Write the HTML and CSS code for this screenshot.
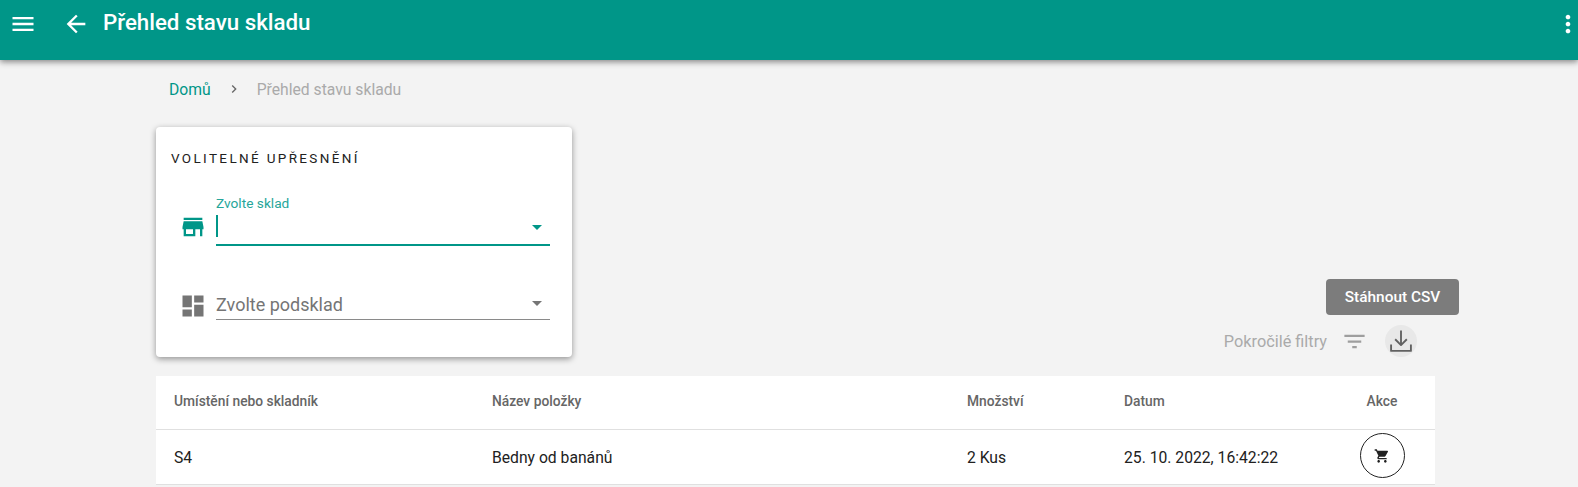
FILE: index.html
```html
<!DOCTYPE html>
<html lang="cs">
<head>
    <meta charset="UTF-8">
    <title>Přehled stavu skladu</title>
    <link rel="stylesheet" href="styles.css">
</head>
<body>
    <header class="topbar">
        <svg class="topbar-icon menu-icon" viewBox="0 0 24 24"><path d="M3 18h18v-2H3v2zm0-5h18v-2H3v2zm0-7v2h18V6H3z"/></svg>
        <svg class="topbar-icon back-icon" viewBox="0 0 24 24"><path d="M20 11H7.83l5.59-5.59L12 4l-8 8 8 8 1.41-1.41L7.83 13H20v-2z"/></svg>
        <h1 class="topbar-title">Přehled stavu skladu</h1>
        <svg class="topbar-icon more-icon" viewBox="0 0 24 24"><path d="M12 8c1.1 0 2-.9 2-2s-.9-2-2-2-2 .9-2 2 .9 2 2 2zm0 2c-1.1 0-2 .9-2 2s.9 2 2 2 2-.9 2-2-.9-2-2-2zm0 6c-1.1 0-2 .9-2 2s.9 2 2 2 2-.9 2-2-.9-2-2-2z"/></svg>
    </header>

    <main class="content">
        <nav class="breadcrumb">
            <a class="crumb-link">Domů</a>
            <svg class="crumb-sep" viewBox="0 0 24 24"><path d="M10 6L8.59 7.41 13.17 12l-4.58 4.59L10 18l6-6z"/></svg>
            <span class="crumb-current">Přehled stavu skladu</span>
        </nav>

        <div class="toolbar">
            <section class="card">
                <h2 class="card-title">VOLITELNÉ UPŘESNĚNÍ</h2>

                <div class="field field-active">
                    <svg class="field-icon" viewBox="0 0 24 24"><path d="M20 4H4v2h16V4zm1 10v-2l-1-5H4l-1 5v2h1v6h10v-6h4v6h2v-6h1zm-9 4H6v-4h6v4z"/></svg>
                    <div class="field-body">
                        <label class="field-label">Zvolte sklad</label>
                        <div class="field-input">
                            <span class="caret"></span>
                            <span class="arrow"></span>
                        </div>
                    </div>
                </div>

                <div class="field">
                    <svg class="field-icon" viewBox="0 0 24 24"><path d="M3 13h8V3H3v10zm0 8h8v-6H3v6zm10 0h8V11h-8v10zm0-18v6h8V3h-8z"/></svg>
                    <div class="field-body">
                        <div class="field-input">
                            <span class="placeholder">Zvolte podsklad</span>
                            <span class="arrow"></span>
                        </div>
                    </div>
                </div>
            </section>

            <div class="actions">
                <button class="csv-button">Stáhnout CSV</button>
                <div class="filters">
                    <span class="filters-label">Pokročilé filtry</span>
                    <svg class="filter-icon" viewBox="0 0 24 24"><path d="M10 18h4v-2h-4v2zM3 6v2h18V6H3zm3 7h12v-2H6v2z"/></svg>
                    <span class="download-round">
                        <svg class="download-icon" viewBox="0 0 24 24"><path d="M12 3v12M7 10.5l5 5 5-5M3.5 15v5.5h17V15"/></svg>
                    </span>
                </div>
            </div>
        </div>

        <table class="stock-table">
            <thead>
                <tr>
                    <th class="col-place">Umístění nebo skladník</th>
                    <th class="col-name">Název položky</th>
                    <th class="col-qty">Množství</th>
                    <th class="col-date">Datum</th>
                    <th class="col-action">Akce</th>
                </tr>
            </thead>
            <tbody>
                <tr>
                    <td>S4</td>
                    <td>Bedny od banánů</td>
                    <td>2 Kus</td>
                    <td>25. 10. 2022, 16:42:22</td>
                    <td class="col-action">
                        <button class="cart-button">
                            <svg class="cart-icon" viewBox="0 0 24 24"><path d="M7 18c-1.1 0-1.99.9-1.99 2S5.9 22 7 22s2-.9 2-2-.9-2-2-2zM1 2v2h2l3.6 7.59-1.35 2.45c-.16.28-.25.61-.25.96 0 1.1.9 2 2 2h12v-2H7.42c-.14 0-.25-.11-.25-.25l.03-.12.9-1.63h7.45c.75 0 1.41-.41 1.75-1.03l3.58-6.49c.08-.14.12-.31.12-.48 0-.55-.45-1-1-1H5.21l-.94-2H1zm16 16c-1.1 0-1.99.9-1.99 2s.89 2 1.99 2 2-.9 2-2-.9-2-2-2z"/></svg>
                        </button>
                    </td>
                </tr>
            </tbody>
        </table>
    </main>
</body>
</html>
```

FILE: styles.css
```css
html, body {
    height: 100%;
    overflow: hidden;
}
body {
    margin: 0;
    background: #f3f3f3;
    font-family: Roboto, "Liberation Sans", sans-serif;
    color: #212121;
}

/* top bar */
.topbar {
    display: flex;
    align-items: flex-start;
    height: 60px;
    background: #009688;
    box-shadow: 0 2px 6px rgba(0,0,0,0.45);
    position: relative;
}
.topbar-icon {
    width: 28px;
    height: 28px;
    fill: #fff;
    margin-top: 10px;
    flex: none;
}
.menu-icon {
    margin-left: 9px;
}
.back-icon {
    margin-left: 25px;
}
.topbar-title {
    margin: 7px 0 0 13px;
    font-size: 22.3px;
    font-weight: 500;
    line-height: 30px;
    color: #fff;
}
.more-icon {
    margin-left: auto;
    margin-right: -4px;
}

/* breadcrumb */
.content {
    padding-left: 156px;
    width: 1279px;
}
.breadcrumb {
    display: flex;
    align-items: center;
    height: 20px;
    margin: 19px 0 0 13px;
    font-size: 15.7px;
}
.crumb-link {
    color: #009688;
}
.crumb-sep {
    width: 16px;
    height: 16px;
    fill: #666;
    margin: 0 15px;
}
.crumb-current {
    color: #aaa;
}

.toolbar {
    display: flex;
    justify-content: space-between;
    margin-top: 28px;
}

/* filter card */
.card {
    width: 416px;
    height: 230px;
    box-sizing: border-box;
    padding: 23px 22px 0 15px;
    background: #fff;
    border-radius: 4px;
    box-shadow: 0 2px 6px rgba(0,0,0,0.4);
}
.card-title {
    margin: 0;
    font-size: 13.5px;
    font-weight: 400;
    line-height: 16px;
    letter-spacing: 2.35px;
}
.field {
    display: flex;
    margin-top: 29px;
    color: #757575;
}
.field-active {
    color: #009688;
}
.field + .field {
    margin-top: 42px;
}
.field-icon {
    width: 28px;
    height: 28px;
    fill: currentColor;
    margin: 18px 9px 0 8px;
    flex: none;
}
.field + .field .field-icon {
    margin-top: 4px;
}
.field-body {
    flex: 1;
}
.field-label {
    display: block;
    font-size: 13.7px;
    line-height: 16px;
    color: #26a69a;
}
.field-input {
    display: flex;
    align-items: center;
    justify-content: space-between;
    height: 31px;
    border-bottom: 1px solid #8a8a8a;
}
.field-active .field-input {
    height: 33px;
    border-bottom: 2px solid #009688;
}
.caret {
    width: 2px;
    height: 22px;
    margin-top: -3px;
    background: #009688;
}
.placeholder {
    margin-top: 2px;
    font-size: 18px;
    color: #757575;
}
.arrow {
    width: 0;
    height: 0;
    margin-right: 8px;
    border-left: 5px solid transparent;
    border-right: 5px solid transparent;
    border-top: 5px solid currentColor;
}

/* right hand actions */
.actions {
    display: flex;
    flex-direction: column;
    align-items: flex-end;
    margin-top: 152px;
}
.csv-button {
    width: 133px;
    height: 36px;
    margin-right: -24px;
    border: none;
    border-radius: 4px;
    background: #7c7c7c;
    color: #fff;
    font-family: inherit;
    font-size: 15.4px;
    font-weight: 500;
}
.filters {
    display: flex;
    align-items: center;
    margin: 10px 18px 0 0;
    color: #aaa;
    font-size: 16.3px;
}
.filter-icon {
    width: 27px;
    height: 27px;
    fill: #9e9e9e;
    margin: 0 17px 0 14px;
}
.download-round {
    display: flex;
    align-items: center;
    justify-content: center;
    width: 32px;
    height: 32px;
    border-radius: 50%;
    background: #e8e8e8;
}
.download-icon {
    width: 28px;
    height: 28px;
    flex: none;
    fill: none;
    stroke: #616161;
    stroke-width: 1.6;
    stroke-linejoin: round;
}

/* table */
.stock-table {
    width: 1279px;
    margin-top: 19px;
    border-collapse: collapse;
    table-layout: fixed;
    background: #fff;
    font-size: 15.7px;
}
.stock-table th {
    height: 50px;
    padding: 0 0 3px 18px;
    text-align: left;
    font-size: 13.8px;
    font-weight: 500;
    color: #666;
    border-bottom: 1px solid #e0e0e0;
}
.stock-table td {
    height: 54px;
    padding: 0 0 0 18px;
    border-bottom: 1px solid #e0e0e0;
}
.col-place {
    width: 300px;
}
.col-name {
    width: 457px;
}
.col-qty {
    width: 139px;
}
.col-date {
    width: 205px;
}
.stock-table .col-action {
    padding: 0 0 3px;
    text-align: center;
}
.stock-table td.col-action {
    height: 51px;
}
.cart-button {
    display: inline-flex;
    align-items: center;
    justify-content: center;
    width: 45px;
    height: 45px;
    padding: 0;
    border: 1px solid #212121;
    border-radius: 50%;
    background: #fff;
    vertical-align: middle;
}
.cart-icon {
    width: 16px;
    height: 16px;
    fill: #212121;
}
```
